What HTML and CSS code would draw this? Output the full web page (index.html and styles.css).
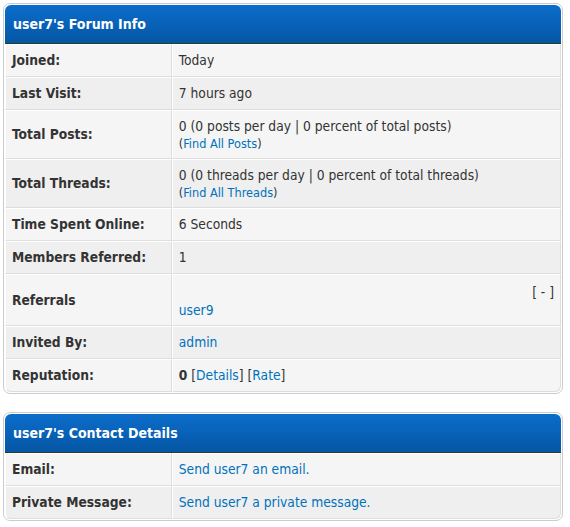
FILE: index.html
```html
<!DOCTYPE html>
<html>
<head>
<meta charset="utf-8">
<link rel="stylesheet" href="styles.css">
</head>
<body>
<div class="page">
<table class="tborder">
  <thead>
    <tr><td class="thead" colspan="2"><strong>user7's Forum Info</strong></td></tr>
  </thead>
  <tbody>
    <tr><td class="trow1 label"><strong>Joined:</strong></td><td class="trow1">Today</td></tr>
    <tr><td class="trow2 label"><strong>Last Visit:</strong></td><td class="trow2">7 hours ago</td></tr>
    <tr><td class="trow1 label"><strong>Total Posts:</strong></td><td class="trow1">0 (0 posts per day | 0 percent of total posts)<div class="smalltext">(<a href="#">Find All Posts</a>)</div></td></tr>
    <tr><td class="trow2 label"><strong>Total Threads:</strong></td><td class="trow2">0 (0 threads per day | 0 percent of total threads)<div class="smalltext">(<a href="#">Find All Threads</a>)</div></td></tr>
    <tr><td class="trow1 label"><strong>Time Spent Online:</strong></td><td class="trow1">6 Seconds</td></tr>
    <tr><td class="trow2 label"><strong>Members Referred:</strong></td><td class="trow2">1</td></tr>
    <tr><td class="trow1 label"><strong>Referrals</strong></td><td class="trow1"><div class="expcol">[ - ]</div><div class="reflist"><a href="#">user9</a></div></td></tr>
    <tr><td class="trow2 label"><strong>Invited By:</strong></td><td class="trow2"><a href="#">admin</a></td></tr>
    <tr><td class="trow1 label"><strong>Reputation:</strong></td><td class="trow1"><strong>0</strong> [<a href="#">Details</a>] [<a href="#">Rate</a>]</td></tr>
  </tbody>
</table>
<table class="tborder second">
  <thead>
    <tr><td class="thead" colspan="2"><strong>user7's Contact Details</strong></td></tr>
  </thead>
  <tbody>
    <tr><td class="trow1 label"><strong>Email:</strong></td><td class="trow1"><a href="#">Send user7 an email.</a></td></tr>
    <tr><td class="trow2 label"><strong>Private Message:</strong></td><td class="trow2"><a href="#">Send user7 a private message.</a></td></tr>
  </tbody>
</table>
</div>
</body>
</html>
```

FILE: styles.css
```css
html, body {
  margin: 0;
  padding: 0;
  background: #fff;
}
.page {
  padding: 3px 7px 0 3px;
  font-family: "DejaVu Sans Condensed", "DejaVu Sans", sans-serif;
  font-size: 13.7px;
  line-height: 19px;
  color: #333;
}
a {
  color: #0072bc;
  text-decoration: none;
}
.tborder {
  width: 100%;
  border: 1px solid #ccc;
  padding: 1px;
  border-radius: 7px;
  background: #fff;
  border-collapse: separate;
  border-spacing: 0;
}
.tborder.second {
  margin-top: 18px;
}
.tborder td {
  color: #333;
  font-size: 13.7px;
  vertical-align: middle;
}
.thead {
  background: linear-gradient(to bottom, #0b6dca 0%, #0862b8 50%, #0556a3 100%);
  color: #fff;
  border-bottom: 1px solid #263c30;
  padding: 8px 8px;
  line-height: 22px;
  border-radius: 6px 6px 0 0;
}
.tborder .thead {
  font-size: 14px;
}
.thead strong {
  color: #fff;
}
.trow1, .trow2 {
  border: 1px solid;
  border-color: #fff #ddd #ddd #fff;
  padding: 6px;
}
.trow1 { background: #f5f5f5; }
.trow2 { background: #efefef; }
.label {
  width: 30%;
}
.smalltext {
  font-size: 12.6px;
  line-height: 16px;
}
.expcol {
  text-align: right;
  line-height: 18px;
  padding-top: 2px;
}
.reflist {
  line-height: 18px;
}
.tborder tbody tr:last-child > td:first-child {
  border-bottom-left-radius: 6px;
}
.tborder tbody tr:last-child > td:last-child {
  border-bottom-right-radius: 6px;
}
```
